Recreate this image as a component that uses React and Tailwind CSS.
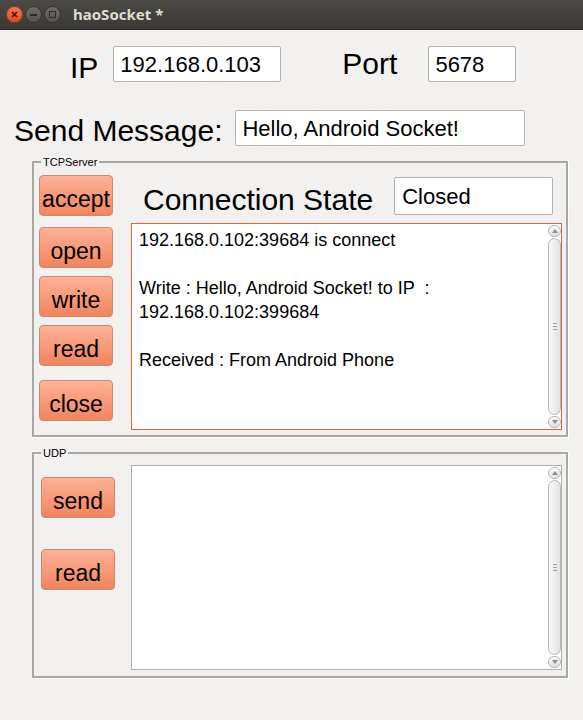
import React from "react";

const font = { fontFamily: '"Liberation Sans", Arial, sans-serif' };

const OrangeButton = ({ label, className = "" }) => (
  <div
    className={`w-[74px] h-[41px] flex items-center justify-center rounded-[4px] border border-[#c98a73] bg-gradient-to-b from-[#fdb196] to-[#f2845d] text-[23px] leading-none text-black pt-[7px] ${className}`}
  >
    {label}
  </div>
);

const ScrollArrow = ({ up }) => (
  <div className="w-[13px] h-[12px] rounded-full border border-[#b9b7b4] bg-gradient-to-b from-[#fbfbfb] to-[#e2e1df] flex items-center justify-center">
    <svg width="6" height="4" viewBox="0 0 6 4">
      {up ? (
        <polygon points="0,4 3,0 6,4" fill="#8e8c88" />
      ) : (
        <polygon points="0,0 3,4 6,0" fill="#8e8c88" />
      )}
    </svg>
  </div>
);

const Scrollbar = () => (
  <div className="w-[13px] flex flex-col items-center pt-[1px] pb-[1px]">
    <ScrollArrow up />
    <div className="flex-1 w-[13px] my-[1px] rounded-full border border-[#b9b7b4] bg-gradient-to-r from-[#fafafa] to-[#e3e2e0] flex flex-col items-center justify-center gap-[2px]">
      <div className="w-[4px] h-px bg-[#a3a19d]" />
      <div className="w-[4px] h-px bg-[#a3a19d]" />
      <div className="w-[4px] h-px bg-[#a3a19d]" />
    </div>
    <ScrollArrow />
  </div>
);

const Field = ({ value, className = "" }) => (
  <div
    className={`h-[36px] bg-white border border-[#b6b3ae] rounded-[2px] flex items-center px-[6px] text-[22px] text-black ${className}`}
  >
    {value}
  </div>
);

const Group = ({ title, className = "", children }) => (
  <div
    className={`relative mx-[32px] w-[536px] border-2 border-[#a9a8a5] shadow-[1px_1px_0_#ffffff] ${className}`}
  >
    <span className="absolute -top-[9px] left-[7px] px-[2px] bg-[#f2f1f0] text-[11px] leading-[16px] text-black">
      {title}
    </span>
    {children}
  </div>
);

export default function App() {
  const lines = [
    "192.168.0.102:39684 is connect",
    "",
    "Write\u00a0: Hello, Android Socket! to IP \u00a0:",
    "192.168.0.102:399684",
    "",
    "Received\u00a0: From Android Phone",
  ];

  return (
    <div className="w-[583px] h-[720px] bg-[#f2f1f0] flex flex-col overflow-hidden" style={font}>
      {/* title bar */}
      <div className="h-[30px] bg-gradient-to-b from-[#4b4a45] to-[#3a3935] flex items-center pl-[6px] border-b border-[#2c2b28]">
        <div className="w-[17px] h-[17px] rounded-full bg-gradient-to-b from-[#f47650] to-[#de4a20] border border-[#9e3a1d] flex items-center justify-center">
          <svg width="7" height="7" viewBox="0 0 7 7">
            <path d="M1 1 L6 6 M6 1 L1 6" stroke="#3c1a10" strokeWidth="1.6" />
          </svg>
        </div>
        <div className="ml-[2px] w-[17px] h-[17px] rounded-full bg-gradient-to-b from-[#6d6c67] to-[#55544f] border border-[#33322f] flex items-center justify-center">
          <div className="w-[7px] h-[2px] bg-[#2e2d2a]" />
        </div>
        <div className="ml-[2px] w-[17px] h-[17px] rounded-full bg-gradient-to-b from-[#6d6c67] to-[#55544f] border border-[#33322f] flex items-center justify-center">
          <div className="w-[7px] h-[7px] border-[1.5px] border-[#2e2d2a]" />
        </div>
        <span
          className="ml-[12px] text-[15px] font-bold text-[#dfdbd2]"
          style={{ fontFamily: '"Noto Sans", "Open Sans", sans-serif' }}
        >
          haoSocket *
        </span>
      </div>

      {/* IP / Port */}
      <div className="flex items-center mt-[15px] pl-[70px]">
        <span className="text-[30px] leading-none pt-[8px]">IP</span>
        <Field value="192.168.0.103" className="ml-[15px] w-[168px]" />
        <span className="ml-[61px] text-[30px] leading-none">Port</span>
        <Field value="5678" className="ml-[31px] w-[88px]" />
      </div>

      {/* Send message */}
      <div className="flex items-center mt-[27px] pl-[14px]">
        <span className="text-[30px] leading-none pt-[6px]">Send Message:</span>
        <Field value="Hello, Android Socket!" className="ml-[13px] w-[290px]" />
      </div>

      {/* TCP server */}
      <Group title="TCPServer" className="mt-[15px] h-[276px]">
        <div className="flex pl-[5px] pt-[12px]">
          <div className="flex flex-col w-[74px]">
            <OrangeButton label="accept" />
            <OrangeButton label="open" className="mt-[11px]" />
            <OrangeButton label="write" className="mt-[8px]" />
            <OrangeButton label="read" className="mt-[8px]" />
            <OrangeButton label="close" className="mt-[14px]" />
          </div>
          <div className="ml-[18px] w-[431px] flex flex-col">
            <div className="flex items-center mt-[2px] h-[38px]">
              <span className="ml-[12px] text-[30px] leading-none pt-[8px]">Connection State</span>
              <div className="ml-[21px] w-[159px] h-[38px] bg-white border border-[#b6b3ae] rounded-[2px] flex items-center px-[7px] text-[22px]">
                Closed
              </div>
            </div>
            <div className="mt-[8px] h-[207px] bg-white border border-[#e8622e] flex">
              <div className="flex-1 pl-[7px] pt-[4px] text-[18px] leading-[24px] text-black">
                {lines.map((l, i) => (
                  <div key={i} className="h-[24px] whitespace-pre">
                    {l}
                  </div>
                ))}
              </div>
              <Scrollbar />
            </div>
          </div>
        </div>
      </Group>

      {/* UDP */}
      <Group title="UDP" className="mt-[15px] h-[226px]">
        <div className="flex pl-[7px]">
          <div className="flex flex-col w-[74px] pt-[23px]">
            <OrangeButton label="send" />
            <OrangeButton label="read" className="mt-[31px]" />
          </div>
          <div className="ml-[16px] mt-[11px] w-[431px] h-[205px] bg-white border border-[#b3b0ab] flex">
            <div className="flex-1" />
            <Scrollbar />
          </div>
        </div>
      </Group>
    </div>
  );
}
